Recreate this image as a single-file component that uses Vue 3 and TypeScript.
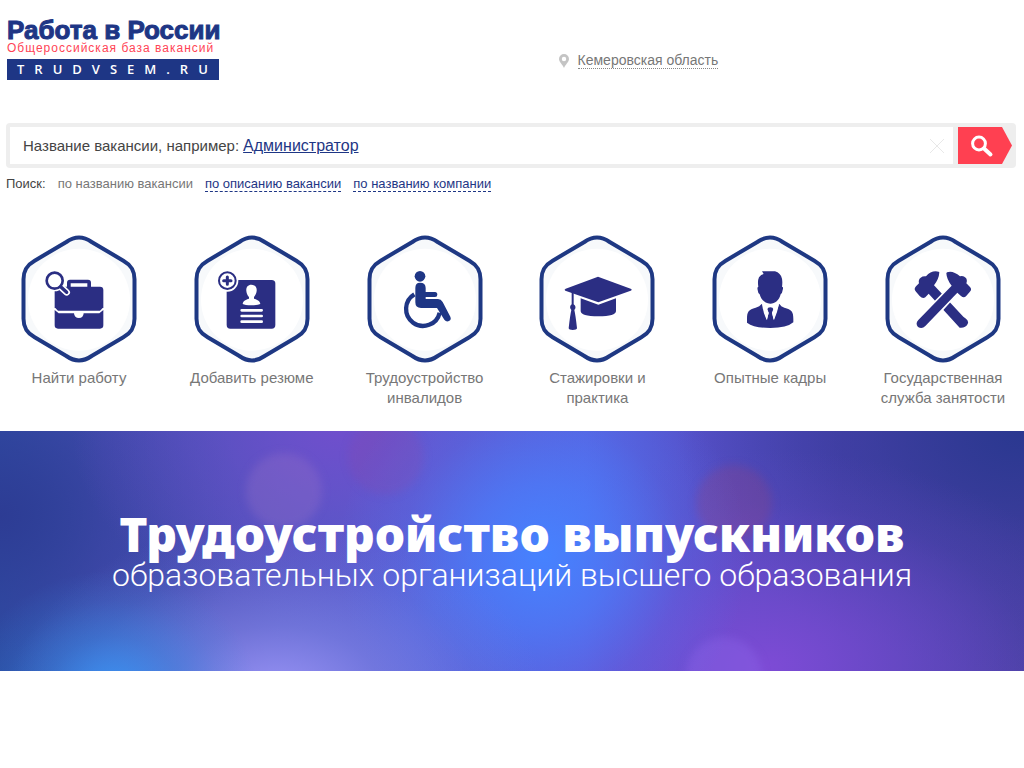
<script setup lang="ts">
import { ref } from 'vue'

type IconName = 'briefcase' | 'resume' | 'wheelchair' | 'cap' | 'person' | 'hammers'

interface Section {
  icon: IconName
  title: string
}

const query = ref('')

const sections: Section[] = [
  { icon: 'briefcase', title: 'Найти работу' },
  { icon: 'resume', title: 'Добавить резюме' },
  { icon: 'wheelchair', title: 'Трудоустройство инвалидов' },
  { icon: 'cap', title: 'Стажировки и практика' },
  { icon: 'person', title: 'Опытные кадры' },
  { icon: 'hammers', title: 'Государственная служба занятости' },
]
</script>

<template>
  <div class="page">
    <header class="header">
      <a class="logo" href="#">
        <span class="logo-name">Работа в России</span>
        <span class="logo-tagline">Общероссийская база вакансий</span>
        <span class="logo-domain">TRUDVSEM.RU</span>
      </a>
      <div class="region">
        <svg class="pin" viewBox="0 0 10 14" aria-hidden="true">
          <path fill-rule="evenodd" d="M5 0a5 5 0 0 0-5 5c0 3 3.600 5.500 5 9 1.400-3.500 5-6 5-9a5 5 0 0 0-5-5zm0 2.800a2.200 2.200 0 1 1 0 4.400 2.200 2.200 0 0 1 0-4.400z" />
        </svg>
        <a class="region-link" href="#">Кемеровская область</a>
      </div>
    </header>

    <form class="search" @submit.prevent>
      <div class="field">
        <label class="field-label" for="query">Название вакансии, например:</label>
        <a class="example" href="#">Администратор</a>
        <input id="query" v-model="query" class="query" type="text" />
        <button class="clear" type="button" aria-label="Очистить" @click="query = ''">
          <svg viewBox="0 0 16 16"><path d="M1 1l14 14M15 1L1 15" /></svg>
        </button>
      </div>
      <button class="submit" type="submit" aria-label="Найти">
        <svg class="submit-shape" viewBox="0 0 54 37">
          <path class="arrow" d="M0 0h44l10 18.500L44 37H0z" />
          <circle cx="21" cy="16.500" r="6.400" />
          <path class="handle" d="M26 21.500l6.500 6" />
        </svg>
      </button>
    </form>

    <nav class="modes" aria-label="Поиск">
      <span class="modes-title">Поиск:</span>
      <span class="mode-current">по названию вакансии</span>
      <a class="mode" href="#">по описанию вакансии</a>
      <a class="mode" href="#">по названию компании</a>
    </nav>

    <nav class="sections" aria-label="Разделы">
      <a v-for="s in sections" :key="s.icon" class="section" href="#">
        <svg class="hexagon" viewBox="34 15 348 384" aria-hidden="true">
          <path
            class="hexagon-frame"
            d="M41.500 148C41.500 120 52 105 75 92L170 36Q208 9 246 36L341 92C364 105 374.500 120 374.500 148V266C374.500 294 364 309 341 322L246 378Q208 405 170 378L75 322C52 309 41.500 294 41.500 266Z"
          />
          <ellipse class="hexagon-core" cx="208" cy="209" rx="153" ry="153" />

          <g v-if="s.icon === 'briefcase'">
            <path d="M172 172V158Q172 149 181 149H235Q244 149 244 158V172H233V160H183V172Z" />
            <path d="M145 170H271Q281 170 281 180V232L271 242H145L135 232V180Q135 170 145 170Z" />
            <path d="M135 240L147 250H193Q194 264 208 264Q221 264 222 250H269L281 240V286Q281 296 271 296H145Q135 296 135 286Z" />
            <path class="halo" d="M154 171L171 187" />
            <circle class="halo-ring" cx="135" cy="152" r="25" />
            <circle class="ring" cx="135" cy="152" r="24" />
            <path class="stick" d="M153 170L171 187" />
          </g>

          <g v-else-if="s.icon === 'resume'" transform="translate(-3 0)">
            <rect x="135" y="150" width="146" height="146" rx="11" />
            <circle class="white" cx="137" cy="152" r="33" />
            <circle class="ring thin" cx="137" cy="152" r="25" />
            <path class="plus" d="M137 141V163M126 152H148" />
            <path class="white" d="M209 164C221 164 226 172 225 183C224 192 220 197 217 201V206C226 209 234 211 236 222Q229 226 209 226Q190 226 183 222C185 211 193 209 202 206V201C198 197 195 192 194 183C193 172 198 164 209 164Z" />
            <path class="lines" d="M180 241H240M180 258H240M180 275H240" />
          </g>

          <g v-else-if="s.icon === 'wheelchair'" class="navy" transform="translate(-3 0)">
            <circle cx="196" cy="139" r="16" />
            <path d="M182 174Q182 158 196 158Q213 158 213 174V186H241Q248 186 248 194Q248 201 241 201H213V207H250Q259 207 264 216L287 260Q291 269 283 273Q275 277 269 269L247 234H199Q182 234 182 217Z" />
            <path class="wheel" d="M179 193A51 51 0 1 0 255 248" />
          </g>

          <g v-else-if="s.icon === 'cap'">
            <path d="M211 140L309 176Q315 179 309 182L212 217L113 182Q108 179 114 176Z" />
            <path d="M159 205L212 224L265 205V243Q265 259 212 259Q159 259 159 243Z" />
            <path d="M132 184H138V223Q148 231 140 240Q144 257 148 295Q147 300 135 300Q124 300 123 295Q127 257 131 240Q123 231 132 223Z" />
          </g>

          <g v-else-if="s.icon === 'person'" transform="translate(-3 0)">
            <path d="M187 124L226 124Q243 129 247 146Q249 157 247 170Q252 170 249 180Q248 190 243 193C239 211 226 221 212 221C197 221 185 211 180 193Q175 190 174 180Q172 171 176 170Q173 153 178 142Q184 133 192 132Z" />
            <path d="M187 222Q191 250 201 270L207 249L202 239Q204 232 212 232Q220 232 222 239L217 249L223 270Q233 248 238 222L240 223Q243 230 254 233C276 239 281 244 281 267V277Q262 294 212 294Q164 294 142 278V267C142 244 147 239 168 233Q181 230 185 223Z" />
            <path class="white" d="M207 248L202 270L192 240Q190 229 188 222L201 232ZM217 248L222 270L232 240Q236 229 238 222L223 232Z" />
          </g>

          <g v-else transform="translate(-3 0)">
            <path d="M200 127Q199 147 184 166L272 260Q291 272 285 282Q278 295 261 293L168 191L158 202Q150 208 141 198L130 185Q122 178 130 169L139 160Q136 149 144 143Q150 138 160 139Q176 120 198 125Z" />
            <path class="halo-fill" d="M160 291Q149 304 136 295Q125 285 136 270L238 166L253 188Z" />
            <path d="M223 127Q240 120 262 139Q272 136 279 143Q285 149 281 160L292 171Q299 178 291 186L280 199Q273 205 265 198L254 188L158 288Q148 299 136 291Q127 281 137 270L237 167Q222 149 221 130Z" />
          </g>
        </svg>
        <span class="section-title">{{ s.title }}</span>
      </a>
    </nav>

    <a class="banner" href="#">
      <span class="spot spot-lilac"></span>
      <span class="spot spot-rose"></span>
      <span class="spot spot-wine"></span>
      <span class="spot spot-violet"></span>
      <strong class="banner-title">Трудоустройство выпускников</strong>
      <span class="banner-text">образовательных организаций высшего образования</span>
    </a>
  </div>
</template>

<style>
body {
  margin: 0;
  background: #fff;
}
</style>

<style scoped>
.page {
  font-family: "Liberation Sans", Arial, sans-serif;
  color: #444;
}

.header {
  display: grid;
  grid-template-columns: 6fr 5fr;
  align-items: start;
  padding-top: 17px;
}

.logo {
  display: flex;
  flex-direction: column;
  justify-self: start;
  margin-left: 7px;
  width: 212px;
  color: #1e3685;
  text-decoration: none;
  white-space: nowrap;
}

.logo-name {
  font-size: 26px;
  line-height: 26px;
  font-weight: 700;
  -webkit-text-stroke: 1px #1e3685;
}

.logo-tagline {
  font-size: 12px;
  line-height: 10px;
  letter-spacing: 1px;
  color: #ff4456;
}

.logo-domain {
  margin-top: 6px;
  padding-left: 10px;
  background: #1e3685;
  color: #fff;
  font-family: "Open Sans", sans-serif;
  font-size: 13px;
  font-weight: 600;
  line-height: 21px;
  letter-spacing: 10px;
  overflow: hidden;
}

.region {
  display: flex;
  align-items: center;
  gap: 9px;
  padding-top: 36px;
}

.pin {
  width: 10px;
  height: 14px;
  fill: #c4c4c4;
}

.region-link {
  font-size: 14px;
  line-height: 15px;
  color: #777;
  text-decoration: none;
  border-bottom: 1px dotted #888;
}

.search {
  display: flex;
  gap: 5px;
  margin: 43px 8px 0 6px;
  padding: 4px;
  border-radius: 4px;
  background: #eee;
}

.field {
  flex: 1;
  display: flex;
  align-items: center;
  min-width: 0;
  height: 37px;
  padding: 0 8px 0 13px;
  box-sizing: border-box;
  background: #fff;
}

.field-label {
  font-size: 15px;
  line-height: 20px;
}

.example {
  margin-left: 4px;
  font-size: 16px;
  line-height: 20px;
  color: #1e3685;
}

.query {
  flex: 1;
  min-width: 0;
  height: 30px;
  padding: 0 8px;
  border: 0;
  outline: 0;
  background: transparent;
  font: inherit;
}

.clear {
  display: flex;
  padding: 0;
  border: 0;
  background: none;
}

.clear svg {
  width: 16px;
  height: 16px;
  fill: none;
  stroke: #e8e8e8;
}

.submit {
  display: flex;
  padding: 0;
  border: 0;
  background: none;
}

.submit-shape {
  width: 54px;
  height: 37px;
  fill: none;
  stroke: #fff;
  stroke-width: 3;
}

.submit-shape .arrow {
  fill: #ff4051;
  stroke: none;
}

.submit-shape .handle {
  stroke-width: 4;
  stroke-linecap: round;
}

.modes {
  display: flex;
  gap: 12px;
  padding: 8px 6px 0;
  font-size: 13px;
  line-height: 15px;
}

.mode-current {
  color: #777;
}

.mode {
  color: #1e3685;
  text-decoration: none;
  border-bottom: 1px dashed #1e3685;
}

.sections {
  display: flex;
  justify-content: space-between;
  padding: 43px 16px 0 14px;
}

.section {
  display: flex;
  flex-direction: column;
  align-items: center;
  gap: 5px;
  width: 130px;
  color: #777;
  text-align: center;
  text-decoration: none;
}

.hexagon {
  width: 116px;
  height: 128px;
  fill: #2b2e83;
}

.hexagon-frame {
  fill: #f7f9fb;
  stroke: #1e3883;
  stroke-width: 12;
}

.hexagon-core,
.white {
  fill: #fff;
}

.navy {
  fill: #1e3685;
}

.ring {
  fill: #fff;
  stroke: #2b2e83;
  stroke-width: 8;
}

.ring.thin {
  stroke-width: 6;
}

.halo-ring {
  fill: #fff;
  stroke: #fff;
  stroke-width: 14;
}

.halo {
  stroke: #fff;
  stroke-width: 20;
  stroke-linecap: round;
}

.stick {
  stroke: #2b2e83;
  stroke-width: 10;
  stroke-linecap: round;
}

.plus {
  stroke: #2b2e83;
  stroke-width: 9;
  stroke-linecap: round;
}

.lines {
  stroke: #fff;
  stroke-width: 8;
  stroke-linecap: round;
}

.wheel {
  fill: none;
  stroke: #1e3685;
  stroke-width: 13;
}

.halo-fill {
  fill: #fff;
  stroke: #fff;
  stroke-width: 9;
}

.section-title {
  font-size: 15px;
  line-height: 20px;
}

.banner {
  position: relative;
  display: flex;
  flex-direction: column;
  align-items: center;
  justify-content: center;
  box-sizing: border-box;
  min-height: 240px;
  margin-top: 23px;
  overflow: hidden;
  color: #fff;
  text-align: center;
  text-decoration: none;
  background:
    radial-gradient(ellipse 14% 50% at 11% 108%, #3a92f2 0%, #3488e280 45%, #3484dc2e 75%, #3080d800 100%),
    radial-gradient(ellipse 26% 72% at 27% 110%, #9a94f6 0%, #8387e899 40%, #7482e22e 75%, #7080e000 100%),
    radial-gradient(ellipse 20% 85% at 53% 52%, #4682ff 0%, #4880ffaa 35%, #4c78f83c 68%, #5070f000 100%),
    radial-gradient(ellipse 34% 90% at 75% 98%, #7d4bd5 0%, #704bcd99 45%, #684bc633 75%, #604bc000 100%),
    radial-gradient(ellipse 26% 80% at 33% 0%, #6f4fcc 0%, #6850c888 45%, #6050c500 100%),
    radial-gradient(ellipse 34% 100% at 100% 0%, #2a3890 0%, #30399488 45%, #35399600 100%),
    radial-gradient(ellipse 24% 85% at 0% 35%, #2d3c94 0%, #333e9999 45%, #38409a00 100%),
    linear-gradient(90deg, #2a52a6 0%, #4450b4 10%, #5052bc 24%, #5860d4 40%, #5864e0 57%, #5650c8 68%, #4c43b0 82%, #4840a2 100%);
}

.banner-title {
  position: relative;
  font-family: "Noto Sans", "Open Sans", sans-serif;
  font-size: 48px;
  font-weight: 900;
  line-height: 48px;
}

.banner-text {
  position: relative;
  font-family: Roboto, sans-serif;
  font-size: 32px;
  font-weight: 300;
  line-height: 34px;
}

.spot {
  position: absolute;
  width: 76px;
  height: 76px;
  border-radius: 50%;
  filter: blur(4px);
}

.spot-lilac {
  left: 24%;
  top: 22px;
  background: #a078c844;
}

.spot-rose {
  left: 34%;
  top: -12px;
  background: #9a409a2b;
}

.spot-wine {
  left: 68%;
  top: 34px;
  background: #9a407440;
}

.spot-violet {
  left: 67%;
  top: 206px;
  background: #9068ee55;
}
</style>
